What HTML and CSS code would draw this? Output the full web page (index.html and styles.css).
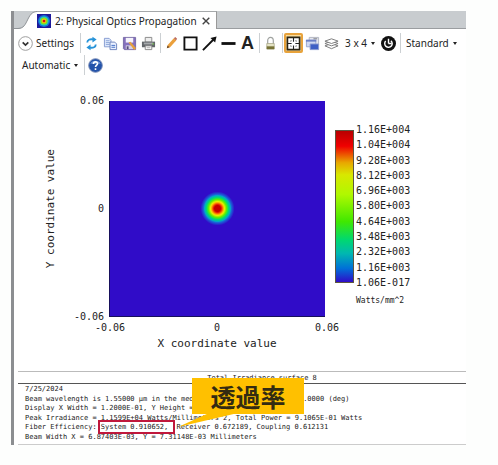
FILE: index.html
```html
<!DOCTYPE html>
<html lang="ja">
<head>
<meta charset="utf-8">
<title>Physical Optics Propagation</title>
<link rel="stylesheet" href="styles.css">
</head>
<body>
<main class="window">
  <header class="tabs">
    <svg class="tab-slope" viewBox="0 0 23 18" aria-hidden="true"><path d="M3 18C10 18 11 14 14 8S19 1 23 1V18Z" fill="#fff"/><path d="M0 17.500H4C10 17 11 14 14 8S19 1 23 .5" fill="none" stroke="#8f9397"/></svg>
    <div class="tab">
      <svg class="tab-icon" viewBox="0 0 14 14" aria-hidden="true"><path fill="#1d1a9c" d="M0 0h14v14H0z"/><circle cx="7" cy="7" r="6" fill="#1674d8"/><circle cx="7" cy="7" r="4.600" fill="#20cfc0"/><circle cx="7" cy="7" r="3.600" fill="#7be020"/><circle cx="7" cy="7" r="2.400" fill="#f4c010"/><circle cx="7" cy="7" r="1.300" fill="#d81010"/></svg>
      <span>2: Physical Optics Propagation</span>
      <button class="close" aria-label="Close"><svg viewBox="0 0 8 8"><path d="M.7.7l6.600 6.600M7.300.7L.7 7.300" stroke="#444" stroke-width="1.400"/></svg></button>
    </div>
  </header>
  <section class="panel">
    <nav class="toolbar">
      <button class="text settings"><svg class="icon" viewBox="0 0 16 16"><circle cx="8" cy="8" r="7.300" fill="#fff" stroke="#999"/><path d="M5 6.700l3 3 3-3" fill="none" stroke="#333" stroke-width="1.800"/></svg>Settings</button>
      <i class="sep"></i>
      <button class="tool" aria-label="Refresh"><svg class="icon" viewBox="0 0 16 16"><path d="M3.500 7C3.500 4 6 3.200 10 3.600M12.500 9c0 3-2.500 3.800-6.500 3.400" fill="none" stroke="#2793d8" stroke-width="2"/><path d="M9 .8l4.500 3L9 7zM7 9l-4.500 3.200L7 15.200z" fill="#2793d8"/></svg></button>
      <button class="tool" aria-label="Copy"><svg class="icon" viewBox="0 0 16 16"><path d="M1.500 2.500h5l2 2v7h-7z" fill="#dfe9fb" stroke="#849bd0"/><path d="M3 5h4M3 7h4M3 9h4" stroke="#8ca5d8"/><path d="M7.500 6.500h5l2 2v6h-7z" fill="#eaf1ff" stroke="#6d82bb"/><path d="M9 10h4M9 12h4" stroke="#3c6bc4"/></svg></button>
      <button class="tool" aria-label="Save"><svg class="icon" viewBox="0 0 16 16"><path d="M1.500 1.500h13v13h-12l-1-1z" fill="#8570bd" stroke="#756aa5"/><path d="M4 2h8v5H4z" fill="#f5f3fb"/><path d="M4 10h8v4H4z" fill="#d7d2e6"/><path d="M7 7l2-1 6 7-2 2z" fill="#e8a13b"/><path d="M5 11h2v3H5z" fill="#544b78"/></svg></button>
      <button class="tool" aria-label="Print"><svg class="icon" viewBox="0 0 16 16"><path d="M4.500 1.500h7v5h-7z" fill="#eee" stroke="#888"/><path d="M1 6h14v6H1z" fill="#62666a"/><path d="M3 7h10v2H3z" fill="#a5a9ab"/><path d="M12 8h2v1h-2z" fill="#6ccb3d"/><path d="M4.500 10.500h7v4h-7z" fill="#fff" stroke="#888"/><path d="M6 12.500h4" stroke="#aaa"/></svg></button>
      <i class="sep"></i>
      <button class="tool" aria-label="Pencil"><svg class="icon" viewBox="0 0 16 16"><path d="M3 13l1-3.500 6.500-7 2.500 2.200L6.500 12z" fill="#eba03b"/><path d="M10.500 2.500L12 1l2 2-1.200 1.700z" fill="#bd6c5c"/><path d="M3 13l.8-2.800L6 12z" fill="#6a4a2c"/></svg></button>
      <button class="tool" aria-label="Rectangle"><svg class="icon" viewBox="0 0 16 16"><path d="M1.500 1.500h13v13h-13z" fill="none" stroke="#111" stroke-width="2"/></svg></button>
      <button class="tool" aria-label="Arrow"><svg class="icon" viewBox="0 0 16 16"><path d="M1 15L12 4" stroke="#111" stroke-width="2"/><path d="M15.500.5L14 7 9 2z" fill="#111"/></svg></button>
      <button class="tool" aria-label="Line"><svg class="icon" viewBox="0 0 16 16"><path d="M.5 8h15" stroke="#111" stroke-width="3"/></svg></button>
      <button class="tool letter" aria-label="Text">A</button>
      <i class="sep"></i>
      <button class="tool" aria-label="Lock"><svg class="icon" viewBox="0 0 16 16"><path d="M5 9V5a3 3.600 0 0 1 6 0V9" fill="none" stroke="#a0a3a0" stroke-width="1.300"/><path d="M4 8h8v6H4z" fill="#e4e3c5" stroke="#aaa88a" stroke-width=".8"/><path d="M4 11h8v3H4z" fill="#777236"/></svg></button>
      <i class="sep"></i>
      <button class="tool active" aria-label="Fit"><svg class="icon" viewBox="0 0 16 16"><path d="M1.500 1.500h13v13h-13z" fill="#fff" stroke="#2a2414" stroke-width="1.800"/><path d="M8 2v4M8 10v4M2 8h4M10 8h4" fill="none" stroke="#222" stroke-width="1.200"/><path d="M5 6V5h1M10 5h1v1M5 10v1h1M10 11h1v-1" fill="none" stroke="#777"/></svg></button>
      <button class="tool" aria-label="Windows"><svg class="icon" viewBox="0 0 16 16"><path d="M4.500 1.500h10v8h-10z" fill="#e4e6ee" stroke="#b0b4c0"/><path d="M9 3h4" stroke="#777"/><path d="M1.500 4.500h10v7h-10z" fill="#cfd9f3" stroke="#96a5cf"/><path d="M1 4h11v2H1z" fill="#6a7fc6"/><path d="M5.500 8.500h9v6h-9z" fill="#3d5fc5" stroke="#8b9bd0"/></svg></button>
      <button class="tool" aria-label="Layers"><svg class="icon" viewBox="0 0 16 16"><g fill="#fff" stroke="#777"><path d="M1 10.500L8 8l7 2.500L8 13.500z"/><path d="M1 8L8 5.500 15 8l-7 2.500z"/><path d="M1 5.500L8 3l7 2.500L8 8z"/></g></svg></button>
      <button class="text menu">3 x 4</button>
      <button class="tool" aria-label="Reset"><svg class="icon" viewBox="0 0 16 16"><circle cx="8" cy="8" r="8" fill="#111"/><path d="M5 5.400A4 4 0 1 0 10.500 5M8 8h3M8 8V3" fill="none" stroke="#fff" stroke-width="1.500"/></svg></button>
      <i class="sep"></i>
      <button class="text menu">Standard</button>
      <button class="text menu">Automatic</button>
      <i class="sep"></i>
      <button class="tool help" aria-label="Help"><svg class="icon" viewBox="0 0 16 16"><circle cx="8" cy="8" r="7.300" fill="#2453aa" stroke="#7c8fb8"/><path d="M2.500 6a6 5 0 0 1 11 0" fill="#6b93d6"/><path d="M5.800 6.300C5.800 3.300 10.400 3.500 10.200 6.100 10 7.600 8 7.700 8 9.700M8 11v1.800" fill="none" stroke="#fff" stroke-width="1.700"/></svg></button>
    </nav>

    <section class="chart">
      <div class="y-title">Y coordinate value</div>
      <div class="y-ticks"><span>0.06</span><span>0</span><span>-0.06</span></div>
      <div class="plot"></div>
      <div class="legend">
        <div class="scale"></div>
        <div class="values"><span>1.16E+004</span><span>1.04E+004</span><span>9.28E+003</span><span>8.12E+003</span><span>6.96E+003</span><span>5.80E+003</span><span>4.64E+003</span><span>3.48E+003</span><span>2.32E+003</span><span>1.16E+003</span><span>1.06E-017</span></div>
        <div class="unit">Watts/mm^2</div>
      </div>
      <div class="x-ticks"><span>-0.06</span><span>0</span><span>0.06</span></div>
      <div class="x-title">X coordinate value</div>
    </section>

    <section class="report">
      <h2>Total Irradiance surface 8</h2>
      <div class="lines">
        <p>7/25/2024</p>
        <p>Beam wavelength is 1.55000 µm in the media with index 1.00000 at 0.0000 (deg)</p>
        <p>Display X Width = 1.2000E-01, Y Height = 1.2000E-01 Millimeters</p>
        <p>Peak Irradiance = 1.1599E+04 Watts/Millimeters^2, Total Power = 9.1065E-01 Watts</p>
        <p>Fiber Efficiency: <mark>System 0.910652,</mark> Receiver 0.672189, Coupling 0.612131</p>
        <p>Beam Width X = 6.87403E-03, Y = 7.31148E-03 Millimeters</p>
      </div>
      <div class="callout">透過率<svg class="tail" viewBox="0 0 60 14" aria-hidden="true"><path d="M0 14L31 0h29z" fill="#ffc000"/></svg></div>
    </section>
  </section>
</main>
</body>
</html>
```
FILE: styles.css
```css
* { box-sizing: border-box; }

body {
  margin: 11px 32px 20px 11px;
  background: #fdfefd;
  color: #222;
  font: 12px/16px "Noto Sans", "Noto Sans CJK JP", sans-serif;
}

button {
  display: flex;
  align-items: center;
  justify-content: center;
  padding: 0;
  border: 0;
  background: none;
  color: inherit;
  font: inherit;
}

svg { display: block; }

.tabs {
  display: flex;
  height: 18px;
  border-left: 3px solid #8c8e91;
  background: linear-gradient(#9a9da0, #9a9da0) bottom / 100% 1px no-repeat #c8cccf;
}

.tab-slope { width: 23px; height: 18px; }

.tab {
  display: flex;
  align-items: center;
  gap: 4px;
  padding-right: 6px;
  border-top: 1px solid #a5a8aa;
  border-right: 1px solid #999;
  background: #fff;
  font-size: 10px;
}

.tab-icon { width: 14px; height: 14px; }
.close { margin-left: 1px; }
.close svg { width: 8px; height: 8px; }

.panel {
  border-left: 3px solid #8c8e91;
  background: #fff;
}

.toolbar {
  display: flex;
  flex-wrap: wrap;
  align-items: center;
  row-gap: 2px;
  padding: 4px 0 4px 4px;
  font-size: 10px;
}

.tool { width: 19px; height: 20px; }
.icon { width: 15px; height: 15px; }
.letter { font: bold 18px/20px "Liberation Sans", sans-serif; }

.active {
  border: 2px solid #e8a33c;
  border-radius: 2px;
  background: #fbdc9a;
}

.sep {
  width: 1px;
  height: 20px;
  margin: 0 1px 0 2px;
  background: #ccd0d3;
}

.text { height: 20px; padding: 0 4px; }
.settings { gap: 3px; padding-left: 0; }

.menu::after {
  margin-left: 4px;
  border: solid transparent;
  border-width: 3px 2px 0;
  border-top-color: #222;
  content: "";
}

.chart {
  display: grid;
  grid-template-columns: 28px 67px minmax(0, 1fr) 141px;
  margin-top: 22px;
  font: 10px/12px "DejaVu Sans Mono", "Liberation Mono", monospace;
}

.y-title {
  justify-self: end;
  align-self: center;
  font-size: 11px;
  line-height: 14px;
  writing-mode: vertical-rl;
  transform: rotate(180deg);
  margin-right: -16px;
}

.y-ticks {
  display: flex;
  flex-direction: column;
  justify-content: space-between;
  margin: -6px 0;
  padding-right: 5px;
  text-align: right;
}

.plot {
  aspect-ratio: 1;
  border: solid #17105c;
  border-width: 0 0 1px 1px;
  background: radial-gradient(circle, #c80000 0 3px, #e82000 4px, #ffb000 6px, #e8f000 7px, #60f000 9px, #00dc70 11px, #00a8c8 13px, #1868d8 14px, #300cc8 17px);
}

.legend {
  display: grid;
  grid-template-columns: 19px 1fr;
  align-content: start;
  column-gap: 2px;
  padding: 29px 0 0 10px;
}

.scale {
  height: 153px;
  border: 1px solid #5c5640;
  background: linear-gradient(#b80000, #f00000 10%, #e8a800 21%, #d8e800 29%, #b0f800 42%, #40e800 60%, #00d870 72%, #00b8b0 81%, #0070d8 91%, #300cc8);
}

.values {
  display: flex;
  flex-direction: column;
  justify-content: space-between;
  margin: -6px 0;
}

.unit {
  grid-column: 2;
  margin-top: 12px;
  font-size: 8px;
}

.x-ticks {
  display: grid;
  grid-template-columns: 1fr 1fr 1fr;
  grid-column: 3;
  margin: 5px -14px 0;
  text-align: center;
}

.x-ticks :first-child { text-align: left; }
.x-ticks :last-child { text-align: right; }

.x-title {
  grid-column: 3;
  font-size: 11px;
  line-height: 20px;
  text-align: center;
}

.report {
  position: relative;
  margin: 17px 0 0 4px;
  border-top: 1px solid #bbb;
  border-bottom: 1px solid #ccc;
  font: 7px/9px "DejaVu Sans Mono", "Liberation Mono", monospace;
}

.report h2 {
  margin: 0;
  padding: 2px 0 0 40px;
  border-bottom: 1px solid #555;
  font: inherit;
  text-align: center;
}

.lines {
  display: grid;
  grid-auto-rows: 1fr;
  align-items: center;
  height: 60px;
  padding: 1px 0 2px 7px;
  white-space: pre;
}

.report p { margin: 0; }

.report mark {
  padding: 0 4px 0 0;
  background: none;
  color: inherit;
  outline: 2px solid #c0183c;
  outline-offset: 1px;
}

.callout {
  position: absolute;
  top: 6px;
  left: 174px;
  width: 112px;
  background: #ffc000;
  color: #332b12;
  font: bold 25px/36px "Noto Sans CJK JP", sans-serif;
  text-align: center;
}

.tail {
  position: absolute;
  top: 35px;
  left: -14px;
  width: 60px;
  height: 14px;
}
```
